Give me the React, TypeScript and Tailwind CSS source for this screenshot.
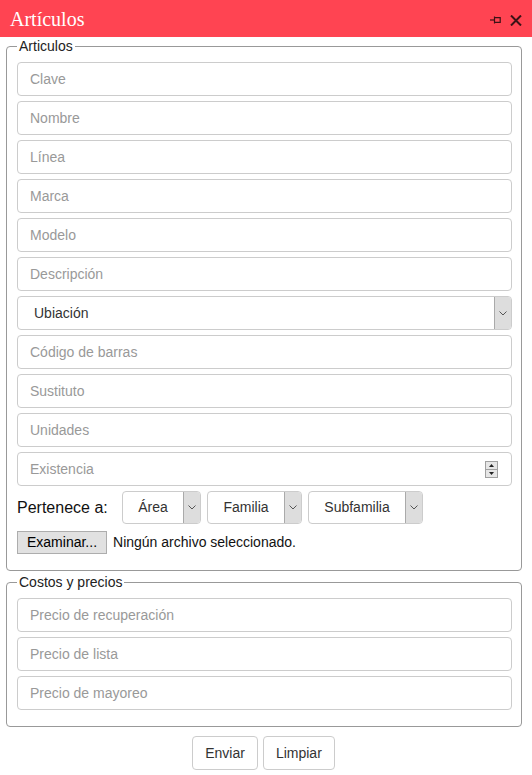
import React from "react";

const font = { fontFamily: '"Liberation Sans", Arial, sans-serif' };

function Field({ ph }: { ph: string }) {
  return (
    <div className="h-[34px] w-full rounded-[4px] border border-[#cccccc] bg-white flex items-center pl-[12px] text-[14px] text-[#999999]">
      {ph}
    </div>
  );
}

function Chevron() {
  return (
    <svg width="8" height="5" viewBox="0 0 8 5" fill="none">
      <path d="M0.5 0.5 L4 4 L7.5 0.5" stroke="#555" strokeWidth="1" />
    </svg>
  );
}

function SmallSelect({ label, w }: { label: string; w: string }) {
  return (
    <div className={`${w} h-[33px] rounded-[4px] border border-[#cccccc] bg-white flex overflow-hidden`}>
      <div className="flex-1 flex items-center justify-center text-[14px] text-[#333333]">{label}</div>
      <div className="w-[17px] h-full bg-[#dddddd] border-l border-[#aaaaaa] flex items-center justify-center">
        <Chevron />
      </div>
    </div>
  );
}

export default function App() {
  const fields1a = ["Clave", "Nombre", "Línea", "Marca", "Modelo", "Descripción"];
  const fields1b = ["Código de barras", "Sustituto", "Unidades"];
  return (
    <div className="w-[532px] h-[775px] bg-white overflow-hidden" style={font}>
      <div className="h-[37px] bg-[#ff4452] flex items-center justify-between pl-[10px] pr-[10px]">
        <span
          className="text-white text-[20px] leading-none pt-[1px]"
          style={{ fontFamily: '"Liberation Serif", "Times New Roman", serif' }}
        >
          Artículos
        </span>
        <div className="flex items-center gap-[9px] pt-[3px]">
          <svg width="11" height="8" viewBox="0 0 11 8" fill="none">
            <path d="M0 4 H4.5" stroke="#3b1216" strokeWidth="1.2" />
            <path d="M4.5 0.5 V7.5" stroke="#3b1216" strokeWidth="1.2" />
            <path d="M5 1.6 H10.2 V6.4 H5" stroke="#3b1216" strokeWidth="1.2" />
          </svg>
          <svg width="12" height="11" viewBox="0 0 12 11" fill="none">
            <path d="M1 0.5 L11 10.5 M11 0.5 L1 10.5" stroke="#3b1216" strokeWidth="2" />
          </svg>
        </div>
      </div>

      <fieldset className="mt-px ml-[6px] mr-[10px] border border-[#999999] rounded-[4px] pl-[10px] pr-[9px] pb-[16px]">
        <legend className="px-[2px] text-[14px] leading-4 text-[#222222]">Articulos</legend>
        <div className="pt-2 flex flex-col gap-[5px]">
          {fields1a.map((f) => (
            <Field key={f} ph={f} />
          ))}
          <div className="h-[34px] w-full rounded-[4px] border border-[#cccccc] bg-white flex overflow-hidden">
            <div className="flex-1 flex items-center pl-[16px] text-[14px] text-[#333333]">Ubiación</div>
            <div className="w-[17px] h-full bg-[#dddddd] border-l border-[#aaaaaa] flex items-center justify-center">
              <Chevron />
            </div>
          </div>
          {fields1b.map((f) => (
            <Field key={f} ph={f} />
          ))}
          <div className="h-[34px] w-full rounded-[4px] border border-[#cccccc] bg-white flex items-center pl-[12px] pr-[13px] text-[14px] text-[#999999]">
            <span className="flex-1">Existencia</span>
            <div className="w-[13px] h-[17px] flex flex-col border border-[#a0a0a0] bg-[#e6e6e6]">
              <div className="flex-1 flex items-center justify-center border-b border-[#a0a0a0]">
                <svg width="5" height="3" viewBox="0 0 5 3"><path d="M0 3 L2.5 0 L5 3Z" fill="#222" /></svg>
              </div>
              <div className="flex-1 flex items-center justify-center">
                <svg width="5" height="3" viewBox="0 0 5 3"><path d="M0 0 L2.5 3 L5 0Z" fill="#222" /></svg>
              </div>
            </div>
          </div>
          <div className="flex items-center">
            <span className="text-[16px] text-[#111111] w-[105px]">Pertenece a:</span>
            <div className="flex gap-[6px]">
              <SmallSelect label="Área" w="w-[79px]" />
              <SmallSelect label="Familia" w="w-[95px]" />
              <SmallSelect label="Subfamilia" w="w-[115px]" />
            </div>
          </div>
          <div className="flex items-center mt-[2px]">
            <div className="h-[23px] px-[9px] flex items-center bg-[#e1e1e1] border border-[#adadad] text-[14px] text-black">
              Examinar...
            </div>
            <span className="ml-[6px] text-[14px] text-[#111111]">Ningún archivo seleccionado.</span>
          </div>
        </div>
      </fieldset>

      <fieldset className="mt-[3px] ml-[6px] mr-[10px] border border-[#999999] rounded-[4px] pl-[10px] pr-[9px] pb-[16px]">
        <legend className="px-[2px] text-[14px] leading-4 text-[#222222]">Costos y precios</legend>
        <div className="pt-2 flex flex-col gap-[5px]">
          <Field ph="Precio de recuperación" />
          <Field ph="Precio de lista" />
          <Field ph="Precio de mayoreo" />
        </div>
      </fieldset>

      <div className="mt-[9px] flex justify-center gap-[5px] pr-[5px]">
        <div className="h-[34px] px-3 flex items-center rounded-[4px] border border-[#cccccc] bg-white text-[14px] text-[#333333]">
          Enviar
        </div>
        <div className="h-[34px] px-3 flex items-center rounded-[4px] border border-[#cccccc] bg-white text-[14px] text-[#333333]">
          Limpiar
        </div>
      </div>
    </div>
  );
}
